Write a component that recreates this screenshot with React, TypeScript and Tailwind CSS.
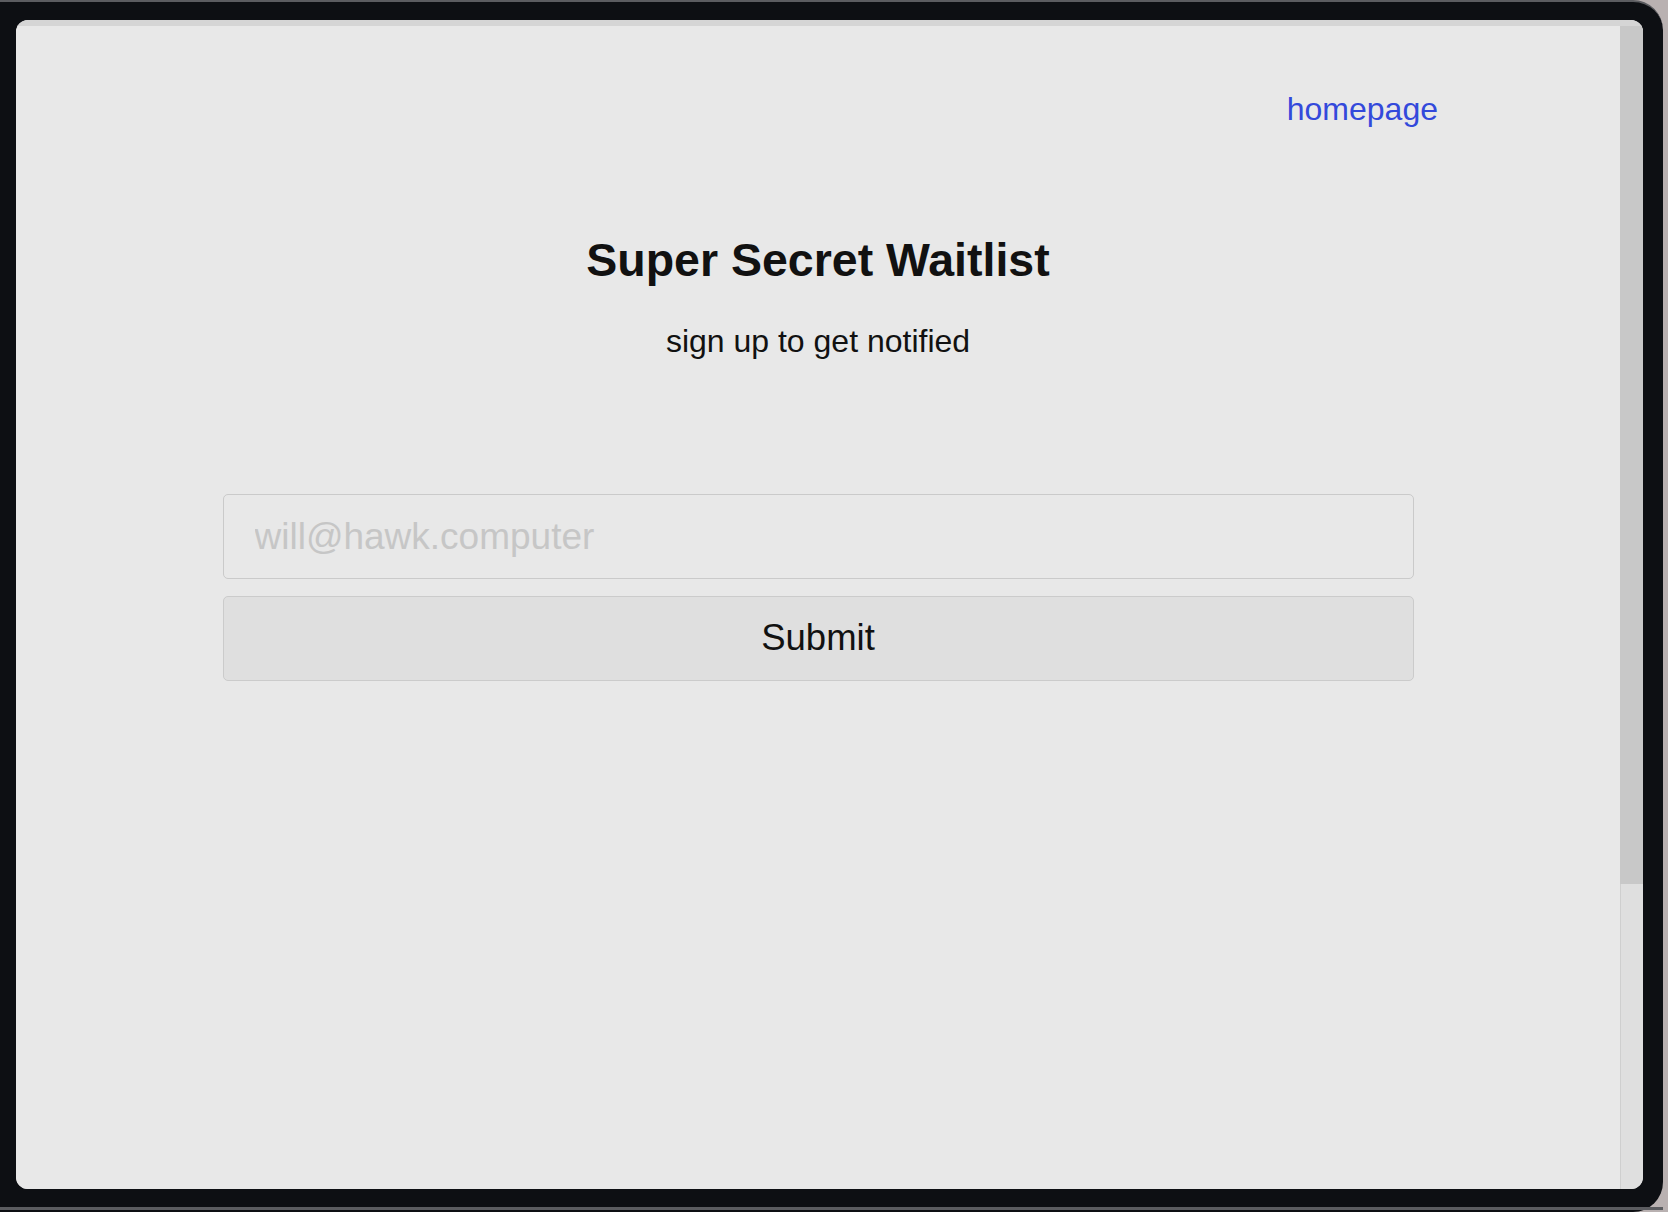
export default function App() {
  return (
    <div className="w-[1668px] h-[1212px] bg-[#b9b1b1] overflow-hidden" style={{ fontFamily: '"Liberation Sans", Arial, sans-serif' }}>
      <div className="w-[1663px] h-[1212px] bg-[#0d0f13] rounded-tr-[30px] rounded-br-[30px] border-t-2 border-[#5b5c60] flex flex-col">
        <div className="pt-[18px] pl-[16px]">
          <div className="w-[1627px] h-[1169px] rounded-[12px] overflow-hidden flex flex-col bg-[#e8e8e8]">
            <div className="h-[6px] bg-[#d5d5d5] shrink-0" />
            <div className="flex flex-1 min-h-0">
              <div className="flex-1 flex flex-col bg-[#e8e8e8]">
                <div className="pt-[65px] pr-[182px] flex justify-end">
                  <a href="#" className="text-[32px] leading-[36px] text-[#3349db]">homepage</a>
                </div>
                <h1 className="mt-[106px] text-center text-[46.5px] leading-[54px] font-bold text-[#111111]">Super Secret Waitlist</h1>
                <p className="mt-[36px] text-center text-[32px] leading-[36px] text-[#111111]">sign up to get notified</p>
                <div className="mt-[135px] mx-auto w-[1191px] flex flex-col gap-[17px]">
                  <input
                    type="email"
                    placeholder="will@hawk.computer"
                    className="h-[85px] w-full rounded-[5px] border border-[#cacaca] bg-[#e8e8e8] pl-[31px] text-[37px] text-[#111111] placeholder:text-[#c6c6c6] outline-none"
                  />
                  <button className="h-[85px] w-full rounded-[5px] border border-[#cbcbcb] bg-[#dfdfdf] text-[36.5px] text-[#111111]">Submit</button>
                </div>
              </div>
              <div className="w-[23px] flex flex-col bg-[#dfdfdf] border-l border-[#cfcfcf]">
                <div className="h-[858px] bg-[#c8c8c8] -ml-px" />
              </div>
            </div>
          </div>
        </div>
        <div className="flex-1" />
        <div className="h-[3px] bg-[#5b5c60] mb-[2px]" />
      </div>
    </div>
  );
}
